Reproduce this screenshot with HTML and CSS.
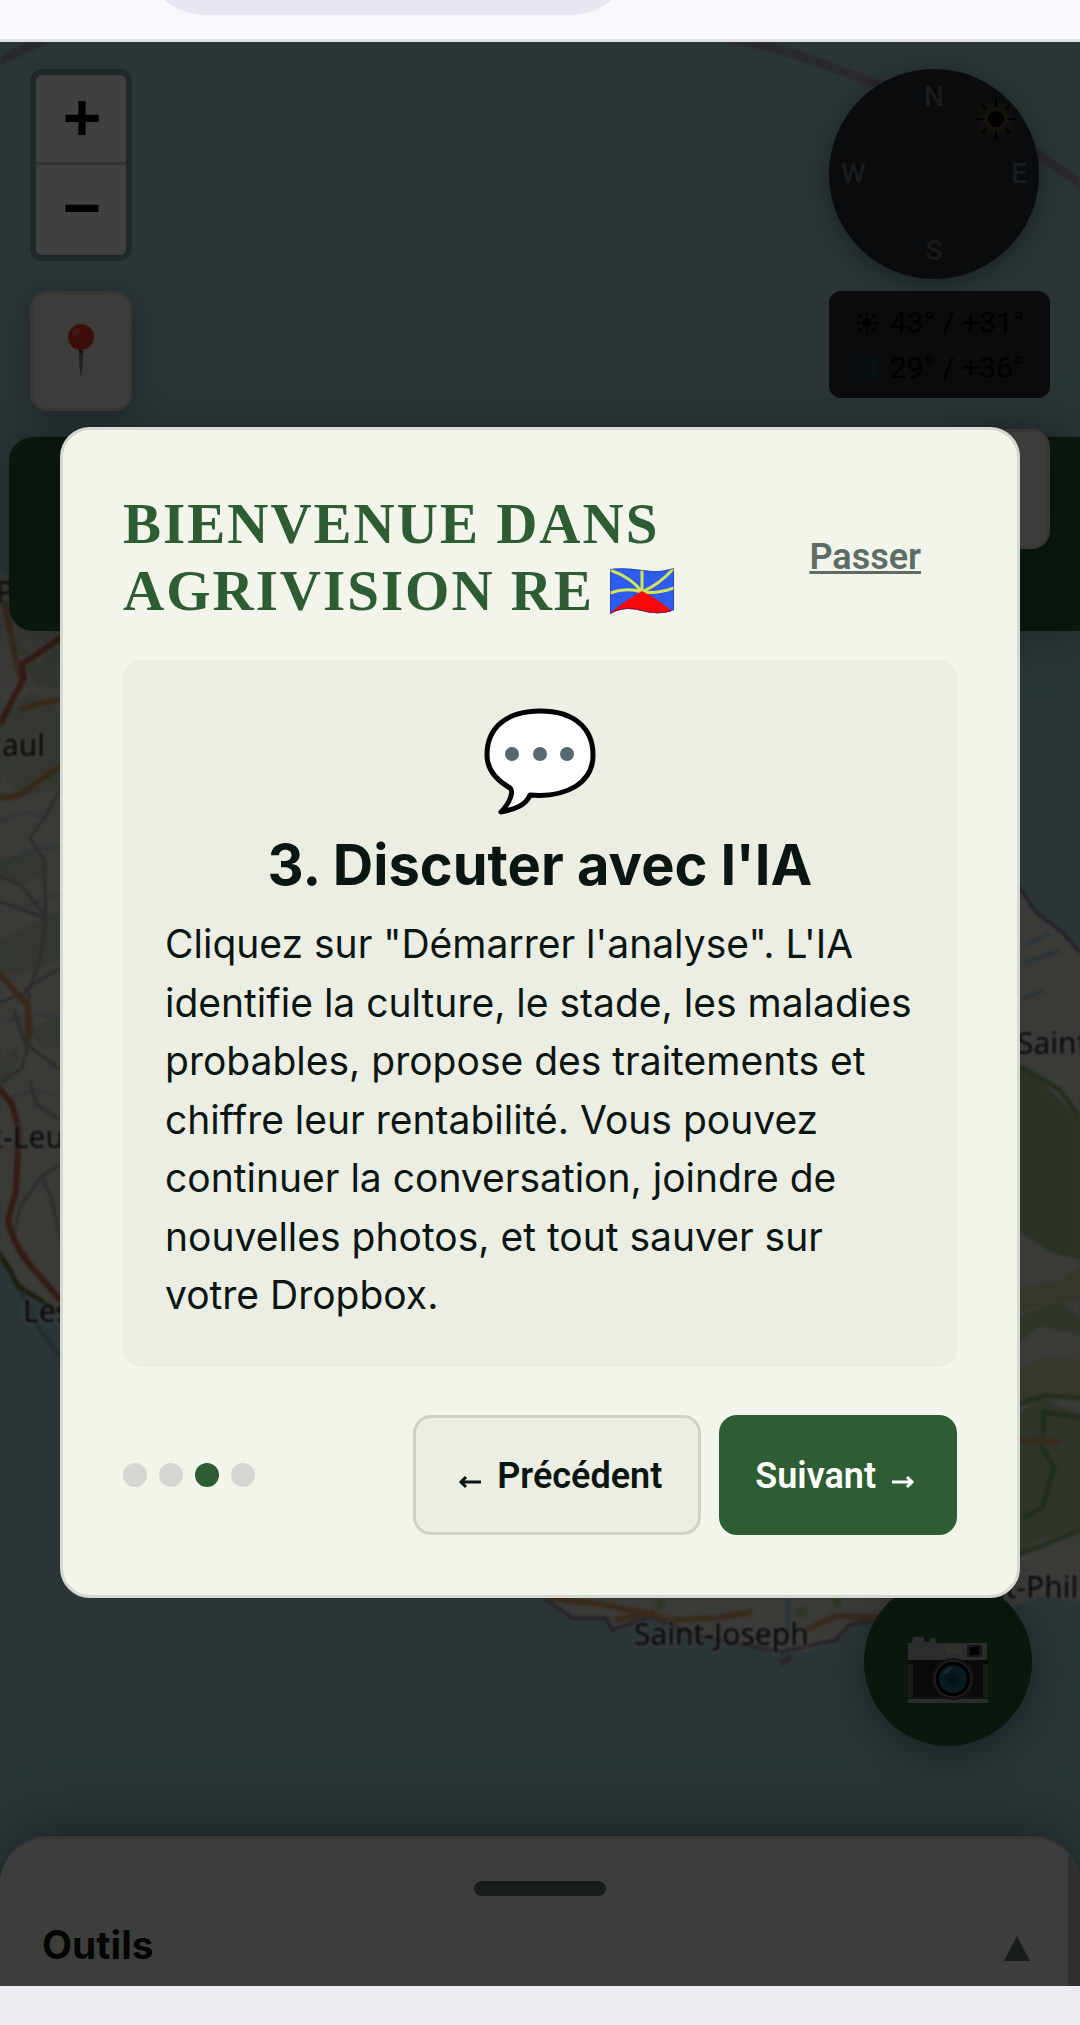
FILE: index.html
```html
<!DOCTYPE html>
<html lang="fr">
<head>
    <meta charset="UTF-8">
    <meta name="viewport" content="width=device-width, initial-scale=1.0">
    <title>AgriVision RE</title>
    <link rel="stylesheet" href="styles.css">
</head>
<body>
    <div class="browser-bar"><div class="url-pill"></div></div>

    <main class="app">
        <!-- Map -->
        <svg class="map" viewBox="0 42 1080 1944" preserveAspectRatio="xMidYMid slice" aria-hidden="true">
            <g fill="none" stroke="#a86c98" stroke-opacity=".5" stroke-width="9">
                <path d="M-10 66Q20 50 55 36"/>
                <path d="M725 38C800 48 860 82 940 106S1040 160 1090 190"/>
            </g>
            <!-- west side -->
            <path fill="#e8e5dc" d="M-10 560L20 590 70 560V1312L36 1302 18 1284 8 1262-10 1240Z"/>
            <g fill="#add19e" fill-opacity=".5">
                <path d="M0 720L30 690 60 710V790L20 795 0 770Z"/>
                <path d="M0 940L60 910V960L20 975 0 970Z"/>
                <path d="M30 1030L60 1015V1045L40 1050Z"/>
                <path d="M0 1060L20 1045 12 1080 0 1085Z"/>
                <path d="M14 640L40 665 60 640V690L35 685Z"/>
                <path d="M0 860L30 850 50 870 24 885 0 880Z"/>
            </g>
            <g fill="none" stroke="#9cc8dc" stroke-width="3" opacity=".6">
                <path d="M0 822L25 812 48 818M0 866L30 850 60 846M4 1022L30 1014 60 1018M10 1098L34 1090 60 1096M0 902L22 908 60 894"/>
            </g>
            <g fill="none" stroke="#b4b1b8" stroke-width="3">
                <path d="M60 790L48 812 30 838 44 860 46 920 40 960 28 992 32 1030 22 1068 0 1082"/>
                <path d="M0 876L22 886 44 914M0 902L46 918M28 1045L50 1062 60 1070M60 1165L42 1176 20 1206 14 1236M42 1176L52 1200 60 1240M30 1080L36 1104 60 1120M0 1002L28 992M24 990L60 968M14 1010L28 1052"/>
            </g>
            <g fill="none" stroke="#dca468" stroke-width="6">
                <path d="M4 600L16 660 22 682M20 710Q40 702 62 700M-6 796Q18 802 34 784L62 766M-6 968L14 990 28 1006 28 1040"/>
            </g>
            <g fill="none" stroke="#cc6c58" stroke-width="6">
                <path d="M62 636Q42 652 22 664L24 678 0 724"/>
                <path d="M-6 1082L12 1104 19 1130 16 1190 8 1220Q14 1248 36 1272L62 1302"/>
            </g>
            <path fill="none" stroke="#6c7a40" stroke-width="5" d="M-6 1246L10 1270 18 1286 62 1314"/>
            <path fill="none" stroke="#6fa58c" stroke-width="5" opacity=".6" d="M20 1290L40 1330 70 1370"/>
            <!-- east side -->
            <path fill="#e8e5dc" d="M1010 874Q1028 900 1038 914L1064 934 1080 952V1600L1040 1596 1000 1612 880 1616 850 1624 836 1640 808 1652 780 1652 700 1636 650 1616 612 1630 606 1618 572 1618 544 1598 530 1580H1010Z"/>
            <path fill="#a8c498" d="M1010 1062L1040 1080 1080 1120V1260L1050 1252 1010 1225Z"/>
            <g fill="#b0cc98" fill-opacity=".8">
                <path d="M1010 1318L1060 1302 1080 1316V1336L1040 1326 1010 1350Z"/>
                <path d="M1010 1420L1040 1398 1080 1414V1530L1040 1540 1010 1560Z"/>
            </g>
            <path fill="#d4ce9c" fill-opacity=".7" d="M1010 1288L1060 1280 1080 1268V1300L1010 1312ZM1010 1370L1050 1356 1080 1360V1394L1010 1400Z"/>
            <g fill="none" stroke="#6ca85c" stroke-width="5" opacity=".7">
                <path d="M1018 1404L1044 1396 1080 1398M1018 1554L1046 1544 1080 1530M1022 1518L1042 1508 1054 1468 1042 1446 1044 1412 1080 1418M1020 1066L1060 1090 1080 1118"/>
            </g>
            <path fill="none" stroke="#9d86a6" stroke-width="4" d="M1014 880L1036 912 1062 932 1080 952"/>
            <path fill="none" stroke="#a9cfe0" stroke-width="4" d="M1024 946L1050 934M1022 964L1060 950M788 1598V1640M1022 1000L1044 990"/>
            <path fill="none" stroke="#a58da4" stroke-width="4" d="M544 1598L572 1618 606 1618 612 1630 650 1616 700 1636 780 1652 836 1640 850 1624 876 1620"/>
            <path fill="#a58da4" d="M778 1660l12-6 2 6-10 6z"/>
            <g fill="none" stroke="#e0aa74" stroke-width="6">
                <path d="M548 1598L600 1604 640 1612 670 1620 720 1618 752 1612M806 1630L836 1616 880 1618M615 1620L655 1612M1014 1440L1060 1442"/>
            </g>
            <g fill="#b5d99d"><circle cx="802" cy="1612" r="6"/><circle cx="660" cy="1604" r="5"/><circle cx="838" cy="1602" r="5"/></g>
            <g class="place">
                <text x="-4" y="603">P</text>
                <text x="45" y="756" text-anchor="end">Saint-Paul</text>
                <text x="64" y="1148" text-anchor="end">Saint-Leu</text>
                <text x="23" y="1322">Les Avirons</text>
                <text x="1017" y="1054">Sainte-Rose</text>
                <text x="634" y="1645">Saint-Joseph</text>
                <text x="946" y="1598">Saint-Philippe</text>
            </g>
        </svg>

        <header class="app-header"></header>

        <div class="controls">
            <div class="controls-left">
                <div class="zoom-control">
                    <button class="zoom-btn" aria-label="Zoom avant">+</button>
                    <button class="zoom-btn" aria-label="Zoom arrière">−</button>
                </div>
                <button class="map-btn" aria-label="Ma position">
                    <svg width="26" height="54" viewBox="0 0 26 54">
                        <path fill="#7890a0" d="M11 24h4v16l-2 14-2-14z"/>
                        <path fill="#40505c" d="M11 24h4v5h-4z"/>
                        <circle cx="13" cy="13" r="13" fill="#f03a28"/>
                        <ellipse cx="8" cy="8" rx="4" ry="5" transform="rotate(40 8 8)" fill="#f8604a"/>
                    </svg>
                </button>
            </div>

            <div class="controls-right">
                <div class="compass">
                    <span class="north">N</span>
                    <svg class="sun" width="48" height="48" viewBox="0 0 48 48">
                        <circle cx="24" cy="24" r="20" fill="url(#sunGlow)"/>
                        <circle cx="24" cy="24" r="8"/>
                        <path stroke="#000" stroke-width="2" d="M24 4v8M24 36v8M4 24h8M36 24h8M10 10l5 5M33 33l5 5M10 38l5-5M33 15l5-5"/>
                        <defs>
                            <radialGradient id="sunGlow">
                                <stop offset=".3" stop-color="#685020"/>
                                <stop offset="1" stop-color="#685020" stop-opacity="0"/>
                            </radialGradient>
                        </defs>
                    </svg>
                    <span class="west">W</span>
                    <span class="east">E</span>
                    <span class="south">S</span>
                </div>
                <div class="sun-info">
                    <div class="sun-row">
                        <svg width="24" height="28" viewBox="0 0 24 28">
                            <circle cx="12" cy="14" r="5"/>
                            <path stroke="#000" stroke-width="1.5" d="M12 2v5M12 21v5M0 14h5M19 14h5M3 5l4 4M17 19l4 4M3 23l4-4M17 9l4-4"/>
                        </svg>
                        <span>43° / +31°</span>
                    </div>
                    <div class="sun-row">
                        <svg width="28" height="28" viewBox="0 0 28 28">
                            <circle cx="14" cy="14" r="14" fill="#184450"/>
                            <path fill="#1c343e" d="M14 0a14 14 0 0 0 0 28 22 22 0 0 0 0-28z"/>
                        </svg>
                        <span>29° / +36°</span>
                    </div>
                </div>
                <button class="map-btn" aria-label="Calques"></button>
            </div>
        </div>

        <button class="fab" aria-label="Prendre une photo">
            <svg width="80" height="66" viewBox="0 0 80 66">
                <path fill="#a8b0b4" d="M5 0h10l2 5h4l2-4h4l2 5h50v18H0V6h4z"/>
                <path fill="#242424" d="M0 23h80v37H0z"/>
                <path fill="#686868" d="M0 27h5v33H0zM75 27h5v33h-5z"/>
                <path fill="#b0b4b8" d="M0 62h80v4H0z"/>
                <path fill="#c8c4a8" d="M38 9h15v8H38z"/>
                <path fill="#505860" d="M59 8h15v12H59z"/>
                <path fill="#000" d="M62 10h9v8h-9z"/>
                <circle cx="45" cy="42" r="21" fill="#4c4848"/>
                <circle cx="45" cy="42" r="18" fill="#000" stroke="#b0a8a8" stroke-width="1"/>
                <circle cx="45" cy="42" r="14" fill="#1e6880"/>
                <circle cx="45" cy="42" r="6" fill="#184c60"/>
                <path fill="#70a0b0" d="M35 38q2-8 9-8l-3 5z"/>
            </svg>
        </button>

        <section class="sheet">
            <div class="sheet-handle"></div>
            <div class="sheet-header">
                <span class="sheet-title">Outils</span>
                <svg width="26" height="25" viewBox="0 0 26 25"><path fill="#5f7168" d="M13 0l13 25H0z"/></svg>
            </div>
        </section>

        <!-- Onboarding -->
        <div class="overlay">
            <div class="modal" role="dialog" aria-labelledby="modalTitle">
                <div class="modal-header">
                    <h2 id="modalTitle">BIENVENUE DANS AGRIVISION RE
                        <svg class="flag" viewBox="0 0 64 46" role="img" aria-label="La Réunion">
                            <defs>
                                <clipPath id="flagShape"><path d="M0 1Q14-1 32 2T64 0V42Q50 48 32 43T0 46Z"/></clipPath>
                            </defs>
                            <g clip-path="url(#flagShape)">
                                <path fill="#2f5cf0" d="M0 0h64v46H0z"/>
                                <path fill="none" stroke="#d3e45a" stroke-width="3" d="M32 24V0M32 24Q22 10 0 2M32 24Q50 16 64 0M32 24Q16 19 0 25M32 24Q48 26 64 20"/>
                                <path fill="#f80808" d="M32 23Q46 30 62 43V50H0V45Q16 32 32 23z"/>
                                <path fill="none" stroke="#1c2c80" stroke-opacity=".5" stroke-width="2" d="M0 1Q14-1 32 2T64 0V42Q50 48 32 43T0 46Z"/>
                            </g>
                        </svg>
                    </h2>
                    <button class="skip-btn">Passer</button>
                </div>

                <div class="step">
                    <svg class="step-icon" viewBox="0 0 112 108">
                        <path fill="#fff" stroke="#000" stroke-width="5" stroke-linejoin="round" d="M56 3C22 3 3 20 3 47C3 62 12 72 26 80C30 83 26 95 17 104C32 101 42 97 46 87C84 90 109 74 109 47C109 20 90 3 56 3Z"/>
                        <g fill="#566970"><circle cx="28" cy="46" r="7"/><circle cx="56" cy="46" r="7"/><circle cx="83" cy="46" r="7"/></g>
                    </svg>
                    <h3>3. Discuter avec l'IA</h3>
                    <p>Cliquez sur "Démarrer l'analyse". L'IA identifie la culture, le stade, les maladies probables, propose des traitements et chiffre leur rentabilité. Vous pouvez continuer la conversation, joindre de nouvelles photos, et tout sauver sur votre Dropbox.</p>
                </div>

                <div class="modal-footer">
                    <div class="dots">
                        <span class="dot"></span>
                        <span class="dot"></span>
                        <span class="dot active"></span>
                        <span class="dot"></span>
                    </div>
                    <div class="actions">
                        <button class="btn">
                            <svg class="arrow" viewBox="0 0 36 36"><path d="M29 24H8M14 19l-5 5 5 5"/></svg>
                            Précédent
                        </button>
                        <button class="btn btn-primary">
                            Suivant
                            <svg class="arrow" viewBox="0 0 36 36"><path d="M7 24h21M22 19l5 5-5 5"/></svg>
                        </button>
                    </div>
                </div>
            </div>
        </div>
    </main>

    <div class="nav-bar"></div>
</body>
</html>
```
FILE: styles.css
```css
* {
    box-sizing: border-box;
}

body {
    margin: 0;
    min-height: 100vh;
    display: flex;
    flex-direction: column;
    font-family: Inter, sans-serif;
    color: #0b1511;
}

button {
    padding: 0;
    border: none;
    cursor: pointer;
    font-family: Roboto, sans-serif;
}

/* Browser chrome */
.browser-bar {
    height: 42px;
    padding: 0 444px 0 140px;
    background: #f9f8ff;
    border-bottom: 3px solid #dfe3e8;
    overflow: hidden;
}

.url-pill {
    height: 132px;
    margin-top: -117px;
    border-radius: 66px;
    background: #e8e6ee;
}

.nav-bar {
    height: 39px;
    background: #edebf2;
}

/* Map */
.app {
    flex: 1;
    position: relative;
    display: flex;
    flex-direction: column;
    background: #aad3df;
    overflow: hidden;
}

.map {
    position: absolute;
    inset: 0;
    width: 100%;
    height: 100%;
    filter: blur(1px);
}

.place {
    font-family: "Noto Sans", sans-serif;
    font-size: 30px;
    fill: #222;
    stroke: #fff;
    stroke-opacity: 0.4;
    stroke-width: 5px;
    paint-order: stroke;
}

.app-header {
    position: absolute;
    top: 395px;
    left: 9px;
    right: 0;
    height: 194px;
    border-radius: 24px 0 0 24px;
    background: #2d5a32;
    box-shadow: 0 0 60px rgba(0, 40, 10, 0.4);
}

.controls {
    position: relative;
    display: flex;
    justify-content: space-between;
    padding: 27px 30px 0;
}

.controls-left,
.controls-right {
    display: flex;
    flex-direction: column;
}

.controls-left {
    gap: 30px;
}

.zoom-control {
    border: 6px solid rgba(0, 0, 0, 0.25);
    border-radius: 12px;
    background-clip: padding-box;
}

.zoom-btn {
    display: block;
    width: 90px;
    height: 90px;
    padding: 6px 0 0 2px;
    background: #fff;
    color: #000;
    font: bold 66px/84px "Liberation Mono", monospace;
}

.zoom-btn:first-child {
    height: 93px;
    border-bottom: 3px solid #ccc;
    border-radius: 6px 6px 0 0;
}

.zoom-btn:last-child {
    height: 93px;
    border-radius: 0 0 6px 6px;
}

.zoom-control .zoom-btn {
    height: 90px;
}

.map-btn {
    width: 102px;
    height: 120px;
    display: flex;
    align-items: center;
    justify-content: center;
    background: #f3f0e9;
    border: 3px solid #dedad2;
    border-radius: 18px;
    box-shadow: 0 6px 36px rgba(0, 30, 40, 0.3);
}

.compass {
    width: 210px;
    height: 210px;
    padding: 12px;
    display: grid;
    grid-template-columns: repeat(3, 1fr);
    grid-template-rows: repeat(3, 1fr);
    place-items: center;
    border-radius: 50%;
    background: #242c32;
    box-shadow: 0 6px 30px rgba(0, 0, 0, 0.4);
    color: #686c70;
    font: 500 28px/32px Roboto, sans-serif;
}

.north {
    grid-area: 1 / 2;
    align-self: start;
}

.sun {
    grid-area: 1 / 3;
    align-self: end;
}

.west {
    grid-area: 2 / 1;
    justify-self: start;
}

.east {
    grid-area: 2 / 3;
    justify-self: end;
}

.south {
    grid-area: 3 / 2;
    align-self: end;
}

.sun-info {
    width: 221px;
    height: 107px;
    margin: 12px 0 31px;
    padding: 9px 26px;
    border-radius: 12px;
    background: #242c32;
    color: #040608;
    font: 400 30px/45px Roboto, sans-serif;
    white-space: nowrap;
}

.sun-row {
    display: flex;
    align-items: center;
    gap: 11px;
}

.controls-right .map-btn {
    align-self: flex-end;
}

.fab {
    position: relative;
    width: 168px;
    height: 168px;
    margin: auto 48px 90px auto;
    padding-top: 15px;
    display: flex;
    align-items: center;
    justify-content: center;
    border-radius: 50%;
    background: #2d5a32;
    box-shadow: 0 12px 48px rgba(0, 0, 0, 0.4);
}

/* Bottom sheet */
.sheet {
    position: relative;
    height: 150px;
    padding-top: 42px;
    background: linear-gradient(to left, #c0c0ba 12px, #f3f5ed 12px);
    border-top: 3px solid #dad9d2;
    border-radius: 48px 48px 0 0;
    box-shadow: 0 -12px 60px rgba(0, 0, 0, 0.35);
}

.sheet-handle {
    width: 132px;
    height: 15px;
    margin: 0 auto 24px;
    border-radius: 8px;
    background: #5f7168;
}

.sheet-header {
    display: flex;
    justify-content: space-between;
    align-items: center;
    padding: 0 50px 0 42px;
}

.sheet-header svg {
    margin-top: 6px;
}

.sheet-title {
    font-size: 39px;
    font-weight: 700;
    line-height: 50px;
}

/* Onboarding modal */
.overlay {
    position: absolute;
    inset: 0;
    padding: 0 60px 3px;
    display: flex;
    align-items: center;
    justify-content: center;
    background: rgba(0, 0, 0, 0.75);
}

.modal {
    width: 100%;
    max-width: 1260px;
    padding: 60px;
    background: #f3f5ed;
    border: 3px solid #d3d9d1;
    border-radius: 30px;
}

.modal-header {
    display: flex;
    justify-content: space-between;
    align-items: center;
    margin-bottom: 36px;
}

.modal-header h2 {
    flex: 1;
    max-width: 600px;
    margin: 0;
    color: #2e5c33;
    font: bold 57px/67px "Liberation Serif", serif;
    letter-spacing: 2px;
}

.flag {
    width: 64px;
    height: 46px;
    vertical-align: -4px;
}

.skip-btn {
    padding: 0 36px;
    height: 120px;
    background: none;
    color: #5d6d64;
    font-size: 36px;
    font-weight: 600;
    text-decoration: underline;
}

.step {
    padding: 48px 42px 42px;
    border-radius: 18px;
    background: #eceee4;
}

.step-icon {
    display: block;
    width: 112px;
    height: 108px;
    margin: 0 auto 15px;
}

.step h3 {
    margin: 0 0 16px;
    text-align: center;
    font-size: 56px;
    line-height: 68px;
    font-weight: 700;
}

.step p {
    margin: 0;
    font-size: 39px;
    line-height: 1.5;
}

.modal-footer {
    display: flex;
    justify-content: space-between;
    align-items: center;
    margin-top: 48px;
}

.dots {
    display: flex;
    gap: 12px;
}

.dot {
    width: 24px;
    height: 24px;
    border-radius: 50%;
    background: #d5d8d0;
}

.dot.active {
    background: #2e5c33;
}

.actions {
    display: flex;
    gap: 18px;
}

.btn {
    height: 120px;
    padding: 2px 36px 0;
    display: flex;
    align-items: center;
    gap: 9px;
    border: 3px solid #d0d2ca;
    border-radius: 18px;
    background: #eceee4;
    color: #0b1511;
    font-size: 36px;
    font-weight: 600;
}

.btn-primary {
    border: none;
    background: #2e5c33;
    color: #fff;
}

.arrow {
    width: 36px;
    height: 36px;
    fill: none;
    stroke: currentColor;
    stroke-width: 3;
}
```
